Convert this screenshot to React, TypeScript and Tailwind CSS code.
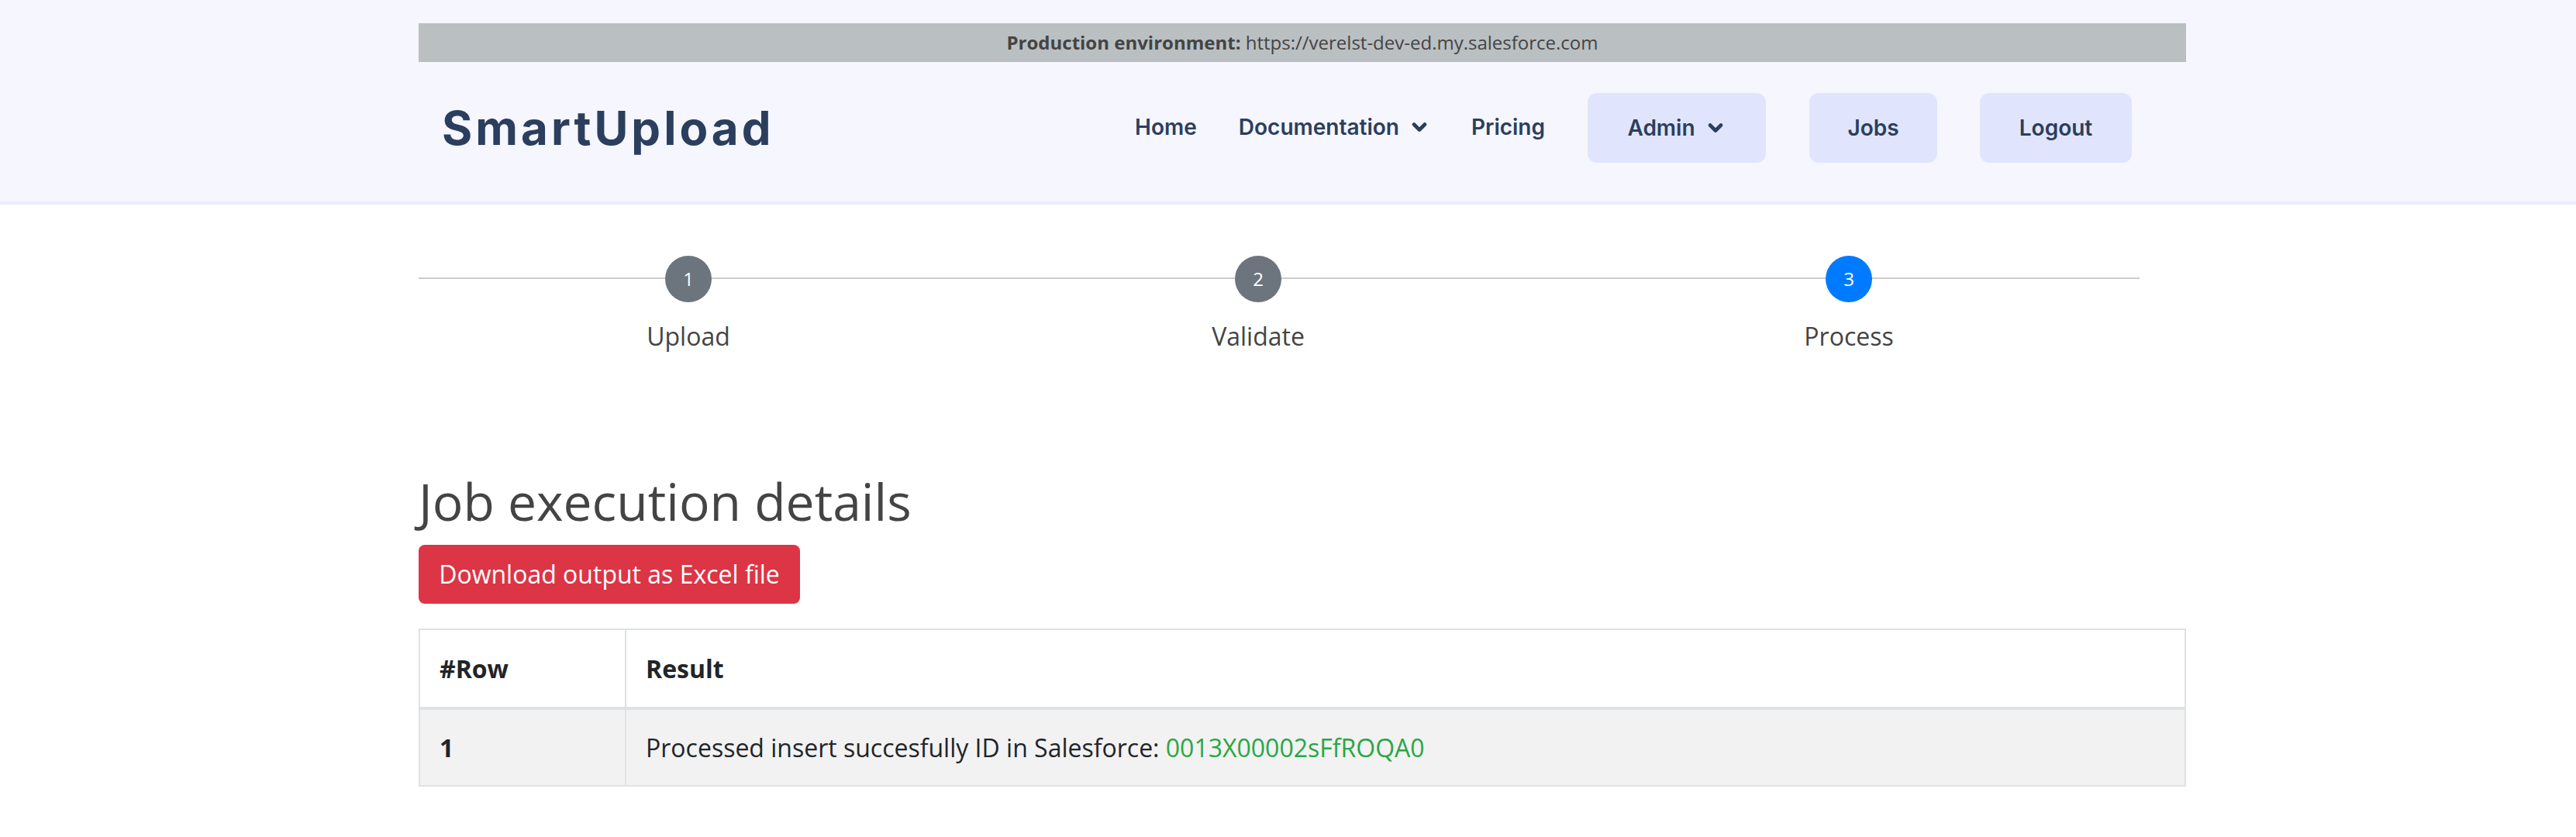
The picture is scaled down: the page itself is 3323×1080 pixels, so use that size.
import { ChevronDown } from "lucide-react";

const sans = "font-['Open_Sans','Noto_Sans',sans-serif]";
const navText = "font-['Inter',sans-serif] text-[28px] leading-[34px] -translate-y-px font-semibold text-[#2c3e5d]";

function NavLink({ label, caret }: { label: string; caret?: boolean }) {
  return (
    <a className={`flex items-center gap-[12px] ${navText}`}>
      {label}
      {caret && <ChevronDown size={28} strokeWidth={4} />}
    </a>
  );
}

function NavButton({ label, caret, width }: { label: string; caret?: boolean; width: string }) {
  return (
    <a className={`flex h-[90px] items-center justify-center gap-[12px] rounded-xl bg-[#e0e5fd] font-['Inter',sans-serif] text-[28px] font-semibold text-[#2c3e5d] ${width}`}>
      {label}
      {caret && <ChevronDown size={28} strokeWidth={4} />}
    </a>
  );
}

function Step({ n, label, active }: { n: number; label: string; active?: boolean }) {
  return (
    <div className="flex flex-col items-center">
      <div className={`flex h-[60px] w-[60px] items-center justify-center rounded-full text-[24px] text-white ${active ? "bg-[#007bff]" : "bg-[#6c757d]"}`}>
        {n}
      </div>
      <span className="mt-[20px] text-[32px] leading-[48px] text-[#444444]">{label}</span>
    </div>
  );
}

export default function App() {
  return (
    <div className={`min-h-screen bg-white ${sans}`}>
      <header className="h-[264px] border-b-4 border-[#ebedfb] bg-[#f5f6fe] pt-[30px] pl-[540px]">
        <div className="w-[2280px]">
          <div className="flex h-[50px] items-center justify-center bg-[#babfc2] text-[24px] text-[#444444]">
            <b>Production environment:</b>&nbsp;https://verelst-dev-ed.my.salesforce.com
          </div>
          <div className="mt-[40px] flex h-[90px] items-center justify-between pr-[70px] pl-[30px]">
            <span className="font-['Inter',sans-serif] text-[60px] font-bold tracking-[4px] text-[#2c3e5d]">SmartUpload</span>
            <nav className="flex items-center">
              <NavLink label="Home" />
              <div className="ml-[54px]"><NavLink label="Documentation" caret /></div>
              <div className="mr-[55px] ml-[53px]"><NavLink label="Pricing" /></div>
              <NavButton label="Admin" caret width="w-[230px]" />
              <div className="ml-[56px]"><NavButton label="Jobs" width="w-[165px]" /></div>
              <div className="ml-[55px]"><NavButton label="Logout" width="w-[196px]" /></div>
            </nav>
          </div>
        </div>
      </header>

      <main className="ml-[540px] w-[2280px]">
        <section className="relative mt-[66px] w-[2220px]">
          <div className="absolute top-[28px] right-0 left-0 h-[2px] bg-[#cccccc]" />
          <div className="relative grid grid-cols-[696px_774px_750px]">
            <Step n={1} label="Upload" />
            <Step n={2} label="Validate" />
            <Step n={3} label="Process" active />
          </div>
        </section>

        <h1 className="mt-[145px] text-[66px] leading-[86px] text-[#444444]">Job execution details</h1>

        <a className="mt-[14px] flex h-[76px] w-[492px] items-center justify-center rounded-lg bg-[#dc3545] text-[32px] text-white">
          Download output as Excel file
        </a>

        <table className="mt-8 w-full border-collapse text-left text-[32px] text-[#212529]">
          <thead>
            <tr className="h-[102px]">
              <th className="w-[266px] border-2 border-b-4 border-[#dee2e6] px-[25px] font-bold">#Row</th>
              <th className="border-2 border-b-4 border-[#dee2e6] px-[25px] font-bold">Result</th>
            </tr>
          </thead>
          <tbody>
            <tr className="h-[100px] bg-[#f2f2f2]">
              <td className="border-2 border-[#dee2e6] px-[25px] font-bold">1</td>
              <td className="border-2 border-[#dee2e6] px-[25px]">
                Processed insert succesfully ID in Salesforce: <span className="text-[#28a745]">0013X00002sFfROQA0</span>
              </td>
            </tr>
          </tbody>
        </table>
      </main>
    </div>
  );
}
